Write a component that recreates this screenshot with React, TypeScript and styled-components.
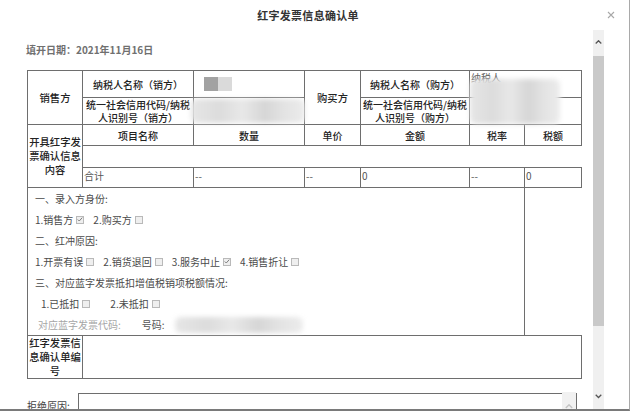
import React from 'react';
import styled, { createGlobalStyle } from 'styled-components';

const GlobalStyle = createGlobalStyle`
    html, body {
        margin: 0;
        padding: 0;
        background: #fff;
    }
    body {
        font-family: "Noto Sans CJK SC", "Noto Sans", "Liberation Sans", sans-serif;
        color: #333;
    }
`;

const Dialog = styled.div`
    width: 630px;
    height: 411px;
    box-sizing: border-box;
    background: #fff;
    border-right: 1px solid #a9a9a9;
    border-bottom: 2px solid #7a7a7a;
    display: flex;
    flex-direction: column;
    overflow: hidden;
`;

const Header = styled.div`
    height: 30px;
    flex: none;
    display: flex;
    align-items: center;
    padding-left: 20px;
`;

const Title = styled.div`
    flex: 1;
    text-align: center;
    font-size: 11px;
    font-weight: 700;
    color: #333;
    letter-spacing: 0.3px;
`;

const CloseButton = styled.div`
    width: 30px;
    margin-right: 3px;
    display: flex;
    align-items: center;
    justify-content: center;
    color: #aaa;
`;

const Body = styled.div`
    flex: 1;
    min-height: 0;
    display: flex;
`;

const Content = styled.div`
    flex: 1;
    min-width: 0;
    overflow: hidden;
    padding-left: 26px;
`;

const DateLine = styled.div`
    margin-top: 14px;
    height: 12px;
    line-height: 12px;
    font-size: 10px;
    font-weight: 700;
    color: #707070;
`;

const Form = styled.table`
    margin-top: 14px;
    margin-left: 1px;
    width: 554px;
    table-layout: fixed;
    border-collapse: collapse;
    font-size: 10px;
`;

const Cell = styled.td<{ $align?: 'left' | 'center'; $noRight?: boolean; $light?: boolean; $big?: boolean }>`
    position: relative;
    border: 1px solid #6e6e6e;
    ${(p) => (p.$noRight ? 'border-right: none;' : '')}
    padding: ${(p) => (p.$big ? '0' : '0 1px')};
    text-align: ${(p) => p.$align || 'center'};
    vertical-align: middle;
    line-height: ${(p) => (p.$big ? '14px' : '13px')};
    font-size: ${(p) => (p.$big ? '10.3px' : '10px')};
    font-weight: ${(p) => (p.$light ? 400 : 500)};
    color: ${(p) => (p.$light ? '#555' : '#222')};
    word-break: break-all;
`;

const SumCell = styled(Cell)`
    vertical-align: top;
    padding-top: 2px;
    line-height: 12px;
`;

const Row = styled.tr<{ $h: number }>`
    height: ${(p) => p.$h}px;
`;

const Pixels = styled.div`
    display: flex;
    padding-left: 9px;
    height: 14px;
`;

const Pixel = styled.span<{ $shade: string }>`
    width: 14px;
    height: 14px;
    background: ${(p) => p.$shade};
`;

const Smudge = styled.div<{ $left: number; $top: number; $w: number; $h: number }>`
    position: absolute;
    left: ${(p) => p.$left}px;
    top: ${(p) => p.$top}px;
    width: ${(p) => p.$w}px;
    height: ${(p) => p.$h}px;
    border-radius: 6px;
    background: linear-gradient(90deg, #e6e6e6 0%, #dcdcdc 25%, #e8e8e8 45%, #d6d6d6 65%, #e2e2e2 80%, #ececec 100%);
    filter: blur(2.5px);
    z-index: 2;
`;

const PeekText = styled.span`
    position: absolute;
    left: 1px;
    top: 1px;
    font-size: 10px;
    line-height: 11px;
    font-weight: 400;
    color: #555;
`;

const Section = styled.td`
    border: 1px solid #6e6e6e;
    padding: 0 0 0 7px;
    vertical-align: top;
    font-size: 10px;
    font-weight: 400;
    color: #4a4a4a;
`;

const Line = styled.div<{ $indent?: number }>`
    position: relative;
    height: 21px;
    display: flex;
    align-items: center;
    padding-left: ${(p) => p.$indent || 0}px;
    white-space: nowrap;
`;

const Option = styled.span<{ $gap?: number }>`
    display: inline-flex;
    align-items: center;
    margin-right: ${(p) => (p.$gap === undefined ? 9 : p.$gap)}px;
`;

const Box = styled.span`
    width: 8px;
    height: 8px;
    margin-left: 3px;
    box-sizing: border-box;
    border: 1px solid #b9b9b9;
    background: #efefef;
    display: inline-flex;
    align-items: center;
    justify-content: center;
`;

const Faint = styled.span`
    color: #a6a6a6;
    margin-right: 21px;
`;

const Code = styled.span`
    color: #555;
`;

const RejectRow = styled.div`
    margin-top: 14px;
    margin-left: 1px;
    display: flex;
`;

const RejectLabel = styled.div`
    width: 51px;
    padding-top: 7px;
    font-size: 10px;
    line-height: 12px;
    color: #444;
`;

const TextBox = styled.div`
    width: 499px;
    height: 60px;
    box-sizing: border-box;
    border: 1px solid #6e6e6e;
    border-bottom: none;
    display: flex;
    justify-content: flex-end;
`;

const TextBoxScroll = styled.div`
    width: 14px;
    margin-top: -2px;
    background: #f1f1f1;
    display: flex;
    justify-content: center;
    padding-top: 12px;
`;

const ScrollBar = styled.div`
    width: 11px;
    margin-right: 25px;
    display: flex;
    flex-direction: column;
    background: #f0f0f0;
`;

const ScrollArrow = styled.div`
    height: 25px;
    flex: none;
    display: flex;
    align-items: center;
    justify-content: center;
`;

const Thumb = styled.div`
    height: 270px;
    margin-top: 1px;
    flex: none;
    background: #c9c9c9;
`;

const Track = styled.div`
    flex: 1;
`;

const Chevron = ({ up, color = '#555', size = 7 }: { up?: boolean; color?: string; size?: number }) => (
    <svg width={size} height={size * 0.6} viewBox="0 0 10 6">
        <polyline
            points={up ? '1,5 5,1 9,5' : '1,1 5,5 9,1'}
            fill="none"
            stroke={color}
            strokeWidth="1.8"
        />
    </svg>
);

const Check = () => (
    <svg width="7" height="7" viewBox="0 0 8 8">
        <polyline points="1,4 3,6 7,1.5" fill="none" stroke="#7a7a7a" strokeWidth="1.3" />
    </svg>
);

const CheckBox = ({ checked }: { checked?: boolean }) => <Box>{checked ? <Check /> : null}</Box>;

const App = () => {
    return (
        <>
            <GlobalStyle />
            <Dialog>
                <Header>
                    <Title>红字发票信息确认单</Title>
                    <CloseButton>
                        <svg width="8" height="8" viewBox="0 0 8 8">
                            <path d="M1 1 L7 7 M7 1 L1 7" stroke="#a8a8a8" strokeWidth="1.1" />
                        </svg>
                    </CloseButton>
                </Header>
                <Body>
                    <Content>
                        <DateLine>填开日期：2021年11月16日</DateLine>
                        <Form>
                            <colgroup>
                                <col style={{ width: 55 }} />
                                <col style={{ width: 111 }} />
                                <col style={{ width: 111 }} />
                                <col style={{ width: 56 }} />
                                <col style={{ width: 109 }} />
                                <col style={{ width: 55 }} />
                                <col style={{ width: 57 }} />
                            </colgroup>
                            <tbody>
                                <Row $h={27}>
                                    <Cell rowSpan={2} $big>销售方</Cell>
                                    <Cell>纳税人名称（销方）</Cell>
                                    <Cell $align="left">
                                        <Pixels>
                                            <Pixel $shade="#a2a2a2" />
                                            <Pixel $shade="#dadada" />
                                        </Pixels>
                                    </Cell>
                                    <Cell rowSpan={2} $big>购买方</Cell>
                                    <Cell>纳税人名称（购方）</Cell>
                                    <Cell colSpan={2} $align="left">
                                        <PeekText>纳税人</PeekText>
                                        <Smudge $left={0} $top={8} $w={90} $h={45} />
                                    </Cell>
                                </Row>
                                <Row $h={27}>
                                    <Cell>统一社会信用代码/纳税人识别号（销方）</Cell>
                                    <Cell>
                                        <Smudge $left={-3} $top={1} $w={114} $h={24} />
                                    </Cell>
                                    <Cell>统一社会信用代码/纳税人识别号（购方）</Cell>
                                    <Cell colSpan={2} />
                                </Row>
                                <Row $h={21}>
                                    <Cell rowSpan={3} $big>开具红字发票确认信息内容</Cell>
                                    <Cell>项目名称</Cell>
                                    <Cell>数量</Cell>
                                    <Cell>单价</Cell>
                                    <Cell>金额</Cell>
                                    <Cell>税率</Cell>
                                    <Cell>税额</Cell>
                                </Row>
                                <Row $h={22}>
                                    <Cell colSpan={6} $noRight />
                                </Row>
                                <Row $h={20}>
                                    <SumCell $align="left" $light>合计</SumCell>
                                    <SumCell $align="left" $light>--</SumCell>
                                    <SumCell $align="left" $light>--</SumCell>
                                    <SumCell $align="left" $light>0</SumCell>
                                    <SumCell $align="left" $light>--</SumCell>
                                    <SumCell $align="left" $light>0</SumCell>
                                </Row>
                                <Row $h={146}>
                                    <Section colSpan={6}>
                                        <Line>一、录入方身份:</Line>
                                        <Line>
                                            <Option>1.销售方<CheckBox checked /></Option>
                                            <Option>2.购买方<CheckBox /></Option>
                                        </Line>
                                        <Line>二、红冲原因:</Line>
                                        <Line>
                                            <Option>1.开票有误<CheckBox /></Option>
                                            <Option>2.销货退回<CheckBox /></Option>
                                            <Option>3.服务中止<CheckBox checked /></Option>
                                            <Option>4.销售折让<CheckBox /></Option>
                                        </Line>
                                        <Line>三、对应蓝字发票抵扣增值税销项税额情况:</Line>
                                        <Line $indent={6}>
                                            <Option $gap={20}>1.已抵扣<CheckBox /></Option>
                                            <Option>2.未抵扣<CheckBox /></Option>
                                        </Line>
                                        <Line $indent={3}>
                                            <Faint>对应蓝字发票代码:</Faint>
                                            <Code>号码:</Code>
                                            <Smudge $left={140} $top={3} $w={128} $h={16} />
                                        </Line>
                                    </Section>
                                </Row>
                                <Row $h={42}>
                                    <Cell $big>红字发票信息确认单编号</Cell>
                                    <Cell colSpan={6} />
                                </Row>
                            </tbody>
                        </Form>
                        <RejectRow>
                            <RejectLabel>拒绝原因:</RejectLabel>
                            <TextBox>
                                <TextBoxScroll>
                                    <Chevron up color="#c4c4c4" size={8} />
                                </TextBoxScroll>
                            </TextBox>
                        </RejectRow>
                    </Content>
                    <ScrollBar>
                        <ScrollArrow>
                            <Chevron up />
                        </ScrollArrow>
                        <Thumb />
                        <Track />
                        <ScrollArrow>
                            <Chevron />
                        </ScrollArrow>
                    </ScrollBar>
                </Body>
            </Dialog>
        </>
    );
};

export default App;
